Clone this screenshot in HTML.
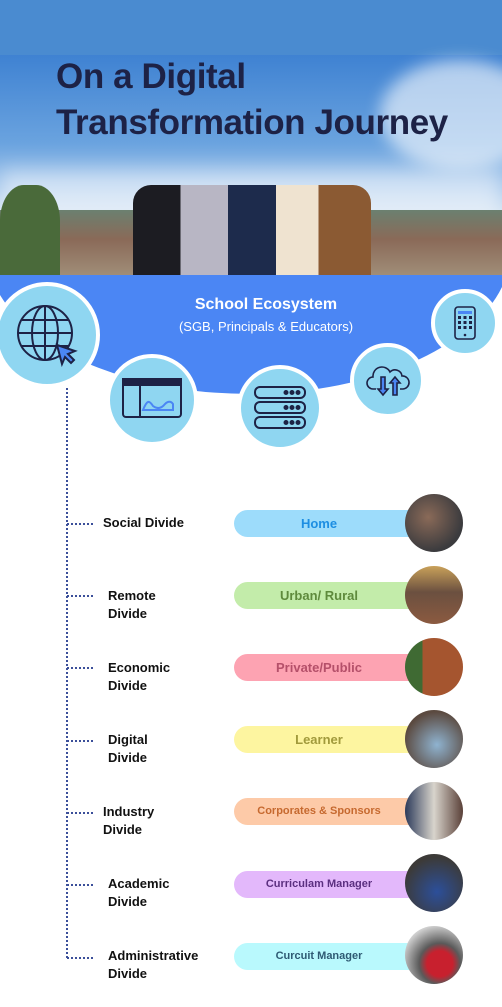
<!DOCTYPE html>
<html><head><meta charset="utf-8"><style>
*{margin:0;padding:0;box-sizing:border-box}
body{width:502px;height:1007px;background:#fff;position:relative;overflow:hidden;font-family:"Liberation Sans",sans-serif}
.abs{position:absolute}
.title{position:absolute;left:56px;color:#1d2246;font-weight:bold;font-size:35px;letter-spacing:-0.4px;white-space:nowrap;z-index:2}
.circ{position:absolute;border-radius:50%;background:#8fd6f1;border:4px solid #fff;display:flex;align-items:center;justify-content:center}
.lbl{position:absolute;font-weight:bold;font-size:13px;color:#111;line-height:18px}
.pill{position:absolute;left:234px;width:190px;height:27px;border-radius:14px;font-weight:bold;text-align:center;line-height:27px;padding-right:20px}
.ph{position:absolute;left:405px;width:58px;height:58px;border-radius:50%}
.dash{position:absolute;left:67px;width:26px;border-top:2px dotted #3b4f9a}
</style></head><body>
<div class="abs" style="left:0;top:0;width:502px;height:55px;background:#4a8bd0"></div>
<div class="abs" style="left:0;top:55px;width:502px;height:220px;background:linear-gradient(180deg,#3f82d2 0%,#6aa3df 40%,#a9c9ec 62%,#dde8f3 75%,#c9d7e5 80%)"></div>
<div class="abs" style="left:380px;top:60px;width:160px;height:110px;border-radius:50%;background:rgba(255,255,255,.6);filter:blur(8px)"></div>
<div class="abs" style="left:0;top:170px;width:502px;height:50px;background:rgba(255,255,255,.5);filter:blur(10px)"></div>
<div class="abs" style="left:0;top:210px;width:502px;height:65px;background:linear-gradient(180deg,#6b8070 0%,#8a6a58 45%,#a08d78 100%)"></div>
<div class="abs" style="left:0;top:185px;width:60px;height:90px;background:#4a6a3a;border-radius:40% 40% 0 0"></div>
<div class="abs" style="left:133px;top:185px;width:238px;height:90px;background:linear-gradient(90deg,#1c1c22 0 20%,#b8b6c4 20% 40%,#1d2b4c 40% 60%,#efe3d0 60% 78%,#8b5a33 78%);border-radius:18px 18px 0 0"></div>
<div class="title" style="top:57px">On a Digital</div>
<div class="title" style="top:103px">Transformation Journey</div>
<svg class="abs" style="left:0;top:275px" width="502" height="140"><path d="M0 0 H502 V12 A262 144 0 0 1 0 20 Z" fill="#4b86f4"/></svg>
<div class="abs" style="left:0;top:296px;width:502px;text-align:center;color:#fff;font-weight:bold;font-size:16px;padding-left:30px">School Ecosystem</div>
<div class="abs" style="left:0;top:319px;width:502px;text-align:center;color:#fff;font-size:13px;padding-left:30px">(SGB, Principals &amp; Educators)</div>
<div class="abs" style="left:66px;top:388px;height:570px;border-left:2px dotted #3b4f9a"></div>
<div class="circ" style="left:-6px;top:282px;width:106px;height:106px"><svg width="64" height="64" viewBox="0 0 64 64" fill="none" stroke="#1d2246" stroke-width="2"><circle cx="30" cy="30" r="27"/><ellipse cx="30" cy="30" rx="13" ry="27"/><path d="M30 3v54M3 30h54M7 17h46M7 43h46"/><path d="M42 42l18 6-7 3 6 6-3 3-6-6-3 7z" fill="#4b86f4"/></svg></div>
<div class="circ" style="left:106px;top:354px;width:92px;height:92px"><svg width="60" height="44" viewBox="0 0 60 44" fill="none" stroke="#1d2246" stroke-width="2"><rect x="1" y="1" width="58" height="38" rx="3"/><rect x="1" y="1" width="58" height="6" fill="#1d2246"/><path d="M18 7v32"/><path d="M21 32c4-10 6-10 10-4 4 3 8 3 12-2 3-3 6-3 8 0v6H21z" stroke="#4b86f4"/></svg></div>
<div class="circ" style="left:237px;top:365px;width:86px;height:86px"><svg width="52" height="44" viewBox="0 0 52 44" fill="none" stroke="#1d2246" stroke-width="2"><rect x="1" y="1" width="50" height="11" rx="5"/><rect x="1" y="16" width="50" height="11" rx="5"/><rect x="1" y="31" width="50" height="11" rx="5"/><g fill="#1d2246"><circle cx="32" cy="6.5" r="1.5"/><circle cx="38" cy="6.5" r="1.5"/><circle cx="44" cy="6.5" r="1.5"/><circle cx="32" cy="21.5" r="1.5"/><circle cx="38" cy="21.5" r="1.5"/><circle cx="44" cy="21.5" r="1.5"/><circle cx="32" cy="36.5" r="1.5"/><circle cx="38" cy="36.5" r="1.5"/><circle cx="44" cy="36.5" r="1.5"/></g></svg></div>
<div class="circ" style="left:350px;top:343px;width:75px;height:75px"><svg width="44" height="32" viewBox="0 0 44 32" fill="none" stroke="#1d2246" stroke-width="1.6"><path d="M10 24H7a6 6 0 0 1 0-12 9 9 0 0 1 17-5 7 7 0 0 1 12 4 6 6 0 0 1 1 13h-3"/><path d="M15 12v12h-3l5 6 5-6h-3V12z" fill="#4b86f4"/><path d="M27 30V18h-3l5-6 5 6h-3v12z" fill="#4b86f4"/></svg></div>
<div class="circ" style="left:431px;top:289px;width:68px;height:68px"><svg width="22" height="34" viewBox="0 0 22 34" fill="none" stroke="#1d2246" stroke-width="1.6"><rect x="1" y="1" width="20" height="32" rx="3"/><rect x="4" y="5" width="14" height="3" fill="#4b86f4" stroke="none"/><g fill="#1d2246" stroke="none"><rect x="4" y="10" width="3" height="3"/><rect x="9.5" y="10" width="3" height="3"/><rect x="15" y="10" width="3" height="3"/><rect x="4" y="15" width="3" height="3"/><rect x="9.5" y="15" width="3" height="3"/><rect x="15" y="15" width="3" height="3"/><rect x="4" y="20" width="3" height="3"/><rect x="9.5" y="20" width="3" height="3"/><rect x="15" y="20" width="3" height="3"/><circle cx="11" cy="29" r="1.3"/></g></svg></div>

<div class="dash" style="top:523px"></div><div class="lbl" style="left:103px;top:514px">Social Divide</div>
<div class="pill" style="top:510px;background:#9ddcfb;color:#1d8ee2;font-size:13px">Home</div>
<div class="ph" style="top:494px;background:radial-gradient(circle at 40% 40%,#8a6a58,#3b3b3e 70%)"></div>

<div class="dash" style="top:595px"></div><div class="lbl" style="left:108px;top:587px">Remote<br>Divide</div>
<div class="pill" style="top:582px;background:#c3ecaa;color:#5e8a3c;font-size:13px">Urban/ Rural</div>
<div class="ph" style="top:566px;background:linear-gradient(180deg,#c9a15a 0%,#6b5040 45%,#8b5a40 100%)"></div>

<div class="dash" style="top:667px"></div><div class="lbl" style="left:108px;top:659px">Economic<br>Divide</div>
<div class="pill" style="top:654px;background:#fda3b2;color:#b5506a;font-size:13px">Private/Public</div>
<div class="ph" style="top:638px;background:linear-gradient(90deg,#3f6a33 0 30%,#a5552f 30%)"></div>

<div class="dash" style="top:740px"></div><div class="lbl" style="left:108px;top:731px">Digital<br>Divide</div>
<div class="pill" style="top:726px;background:#fdf5a0;color:#a19a3c;font-size:13px">Learner</div>
<div class="ph" style="top:710px;background:radial-gradient(circle at 55% 60%,#8fb3d0,#5b4a40 70%)"></div>

<div class="dash" style="top:812px"></div><div class="lbl" style="left:103px;top:803px">Industry<br>Divide</div>
<div class="pill" style="top:798px;background:#fdcaa8;color:#c6692f;font-size:11px">Corporates &amp; Sponsors</div>
<div class="ph" style="top:782px;background:linear-gradient(90deg,#2c3a5a,#d8d4cc 50%,#5a4038)"></div>

<div class="dash" style="top:884px"></div><div class="lbl" style="left:108px;top:875px">Academic<br>Divide</div>
<div class="pill" style="top:871px;background:#e3b8fb;color:#5b2f80;font-size:11px">Curriculam Manager</div>
<div class="ph" style="top:854px;background:radial-gradient(circle at 55% 65%,#2c4f9a,#3c3a38 70%)"></div>

<div class="dash" style="top:957px"></div><div class="lbl" style="left:108px;top:947px">Administrative<br>Divide</div>
<div class="pill" style="top:943px;background:#b9f9fd;color:#2e5a73;font-size:11px">Curcuit Manager</div>
<div class="ph" style="top:926px;background:radial-gradient(circle at 60% 65%,#c8202e 0 25%,#5a5a5a 40%,#cfcfcf 75%)"></div>
</body></html>
